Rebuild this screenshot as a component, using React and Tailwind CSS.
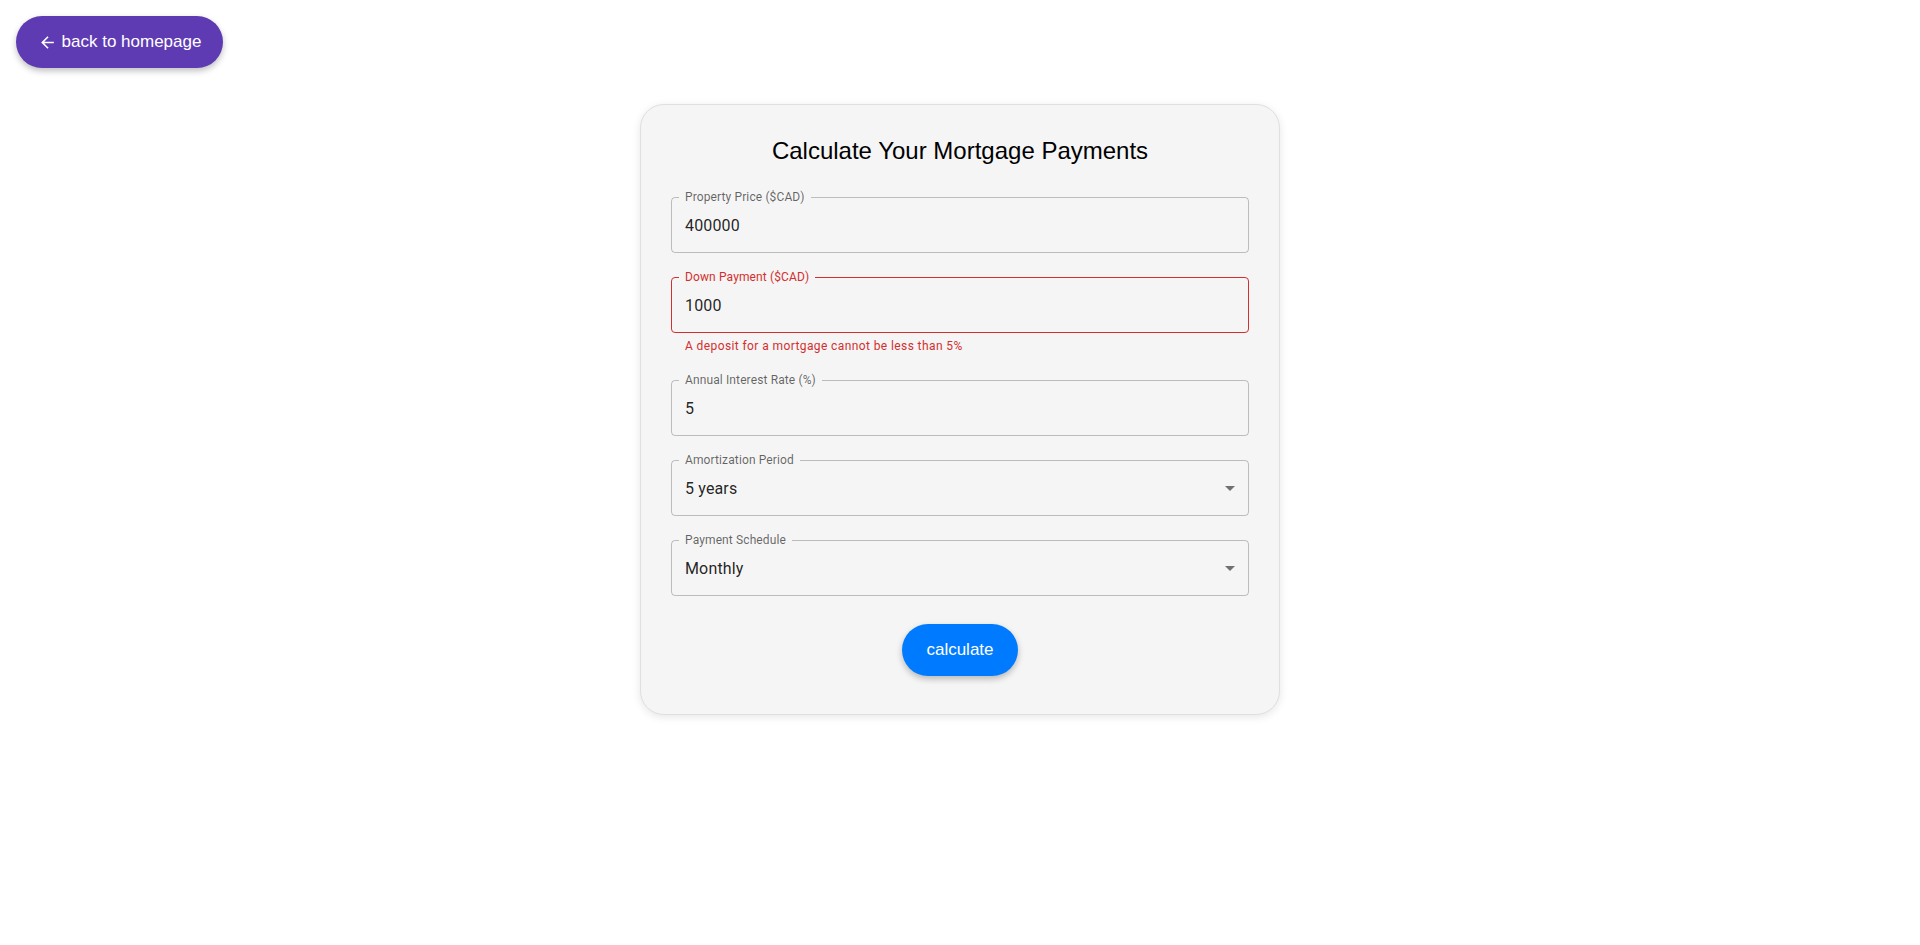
const roboto = { fontFamily: "Roboto, 'Liberation Sans', sans-serif" };

function ArrowBack() {
  return (
    <svg viewBox="0 0 24 24" className="h-[19px] w-[19px] shrink-0 fill-current" aria-hidden="true">
      <path d="M20 11H7.83l5.59-5.59L12 4l-8 8 8 8 1.41-1.41L7.83 13H20v-2z" />
    </svg>
  );
}

function ArrowDrop() {
  return (
    <svg viewBox="0 0 24 24" className="h-6 w-6 shrink-0 fill-[rgba(0,0,0,0.54)]" aria-hidden="true">
      <path d="M7 10l5 5 5-5z" />
    </svg>
  );
}

function OutlinedField({ label, value, error, helper, select }) {
  const borderColor = error ? "border-[#d32f2f]" : "border-[rgba(0,0,0,0.23)]";
  const labelColor = error ? "text-[#d32f2f]" : "text-[rgba(0,0,0,0.6)]";

  return (
    <div>
      <div className={`relative flex h-[56px] items-center rounded-[4px] border ${borderColor} pl-[13px] pr-[6px]`}>
        <span className={`absolute left-[7px] top-[-7px] bg-[#f5f5f5] px-[6px] text-[12px] leading-[13px] tracking-[0.01em] ${labelColor}`}>
          {label}
        </span>
        <span className="flex-1 text-[16px] leading-[23px] tracking-[0.00938em] text-[rgba(0,0,0,0.87)]">{value}</span>
        {select && <ArrowDrop />}
      </div>
      {helper && (
        <p className="mx-[14px] mt-[3px] text-[12px] leading-[20px] tracking-[0.03333em] text-[#d32f2f]">{helper}</p>
      )}
    </div>
  );
}

export default function App() {
  return (
    <div className="min-h-[945px] bg-white" style={roboto}>
      <div className="p-4">
        <button className="flex h-[52px] w-[207px] items-center justify-center gap-[5px] rounded-full bg-[#5e3bb3] text-[17px] text-white shadow-[0_3px_6px_rgba(0,0,0,0.25)] font-['Liberation_Sans',Arial,sans-serif]">
          <ArrowBack />
          back to homepage
        </button>
      </div>

      <div className="mx-auto mt-[20px] w-[640px] rounded-[24px] border border-[#e0e0e0] bg-[#f5f5f5] px-[30px] pb-[38px] pt-[32px] shadow-[0_2px_8px_rgba(0,0,0,0.1)]">
        <h1 className="text-center text-[24px] leading-[28px] text-black font-['Liberation_Sans',Arial,sans-serif]">
          Calculate Your Mortgage Payments
        </h1>

        <div className="mt-[32px] flex flex-col gap-[24px]">
          <OutlinedField label="Property Price ($CAD)" value="400000" />
          <OutlinedField
            label="Down Payment ($CAD)"
            value="1000"
            error
            helper="A deposit for a mortgage cannot be less than 5%"
          />
          <OutlinedField label="Annual Interest Rate (%)" value="5" />
          <OutlinedField label="Amortization Period" value="5 years" select />
          <OutlinedField label="Payment Schedule" value="Monthly" select />
        </div>

        <div className="mt-[28px] flex justify-center">
          <button className="h-[52px] w-[116px] rounded-full bg-[#007bff] text-[17px] text-white shadow-[0_3px_6px_rgba(0,0,0,0.25)] font-['Liberation_Sans',Arial,sans-serif]">
            calculate
          </button>
        </div>
      </div>
    </div>
  );
}
